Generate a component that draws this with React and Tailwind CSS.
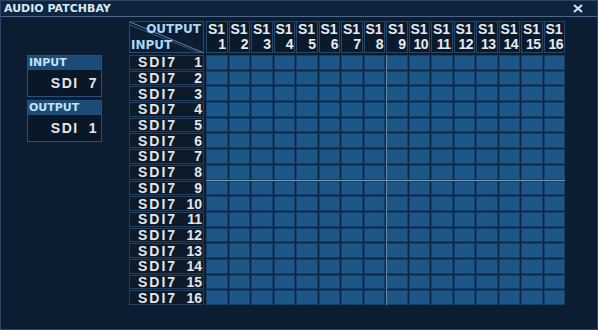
import React from 'react';

const cols = Array.from({ length: 16 }, (_, i) => i + 1);
const rows = Array.from({ length: 16 }, (_, i) => i + 1);
const arial = { fontFamily: '"Liberation Sans", Arial, sans-serif' };

const InfoBox = ({ title, value }) => (
  <div className="w-[75px] border border-[#24507a] bg-[#0a1727]">
    <div className="h-[14px] bg-[#1b4b76] px-[1px] text-[11px] font-bold leading-[14px] text-[#bfe3fb]">
      {title}
    </div>
    <div style={arial} className="flex h-[26px] items-center justify-end pr-[3px] text-[14px] font-bold tracking-[1.5px] text-[#e4e8ee]">
      SDI<span className="ml-[10px]">{value}</span>
    </div>
  </div>
);

const App = () => {
  return (
    <div
      className="relative h-[330px] w-[598px] overflow-hidden border border-[#2c4764] bg-[#0c1d31]"
      style={{ fontFamily: '"DejaVu Sans", Verdana, sans-serif' }}
    >
      {/* title bar */}
      <div className="flex h-[16px] items-center justify-between border-b border-[#48678a] bg-[#0f243d] pl-[3px] pr-[14px]">
        <span className="text-[11px] font-bold leading-none text-[#d6ebf9]">AUDIO PATCHBAY</span>
        <svg width="10" height="9" viewBox="0 0 10 9">
          <path d="M1 1 L9 8 M9 1 L1 8" stroke="#cfe7f6" strokeWidth="2" />
        </svg>
      </div>

      <div className="flex pt-[4px]">
        {/* left info */}
        <div className="ml-[26px] mt-[34px] flex flex-col gap-[3px]">
          <InfoBox title="INPUT" value="7" />
          <InfoBox title="OUTPUT" value="1" />
        </div>

        {/* patch grid */}
        <div className="ml-[27px] flex flex-col">
          <div className="flex">
            <div className="relative h-[32px] w-[75px] border border-[#2a4a6a] bg-[#0c1d31]">
              <svg className="absolute left-0 top-0" width="75" height="32" viewBox="0 0 75 32">
                <path d="M0 0 L74 31" stroke="#5f86ab" strokeWidth="1" />
                <path d="M0 3 L70 31" stroke="#33577a" strokeWidth="1" />
              </svg>
              <span className="absolute right-[2px] top-[1px] text-[12px] font-bold leading-none text-[#a9d8f6]">OUTPUT</span>
              <span className="absolute bottom-[1px] left-[1px] text-[12px] font-bold leading-none text-[#a9d8f6]">INPUT</span>
            </div>
            <div className="ml-[2px] grid grid-cols-[repeat(16,21.5px)] gap-x-[1px]">
              {cols.map((c) => (
                <div key={c} style={arial} className="flex h-[32px] flex-col justify-between border border-[#24476a] bg-[#0b1a2b] px-[1px] py-[1px] text-[14px] font-bold leading-[13px] text-[#e6ebf0]">
                  <span>S1</span>
                  <span className="self-end tracking-[-0.5px]">{c}</span>
                </div>
              ))}
            </div>
          </div>

          <div className="mt-[2px] flex">
            <div className="flex w-[75px] flex-col gap-[1px]">
              {rows.map((r) => (
                <div key={r} style={arial} className="flex h-[14.7px] items-center justify-between border border-[#25405c] bg-[#0d1a2a] pl-[8px] pr-[1px] text-[14px] font-bold leading-none tracking-[2px] text-[#e2e6ea]">
                  <span>SDI7</span>
                  <span className="tracking-normal">{r}</span>
                </div>
              ))}
            </div>
            <div className="relative ml-[2px] grid grid-cols-[repeat(16,21.5px)] gap-[1px] bg-[#0c2540]">
              {rows.map((r) =>
                cols.map((c) => (
                  <div key={`${r}-${c}`} className="h-[14.7px] border border-[#14406a] bg-[#1d5788]" />
                ))
              )}
              <div className="absolute bottom-0 left-[179.5px] top-0 w-[1px] bg-[#6e8ba8]" />
              <div className="absolute left-0 right-0 top-[124.5px] h-[1px] bg-[#7a96b0]" />
            </div>
          </div>
        </div>
      </div>
    </div>
  );
};

export default App;
